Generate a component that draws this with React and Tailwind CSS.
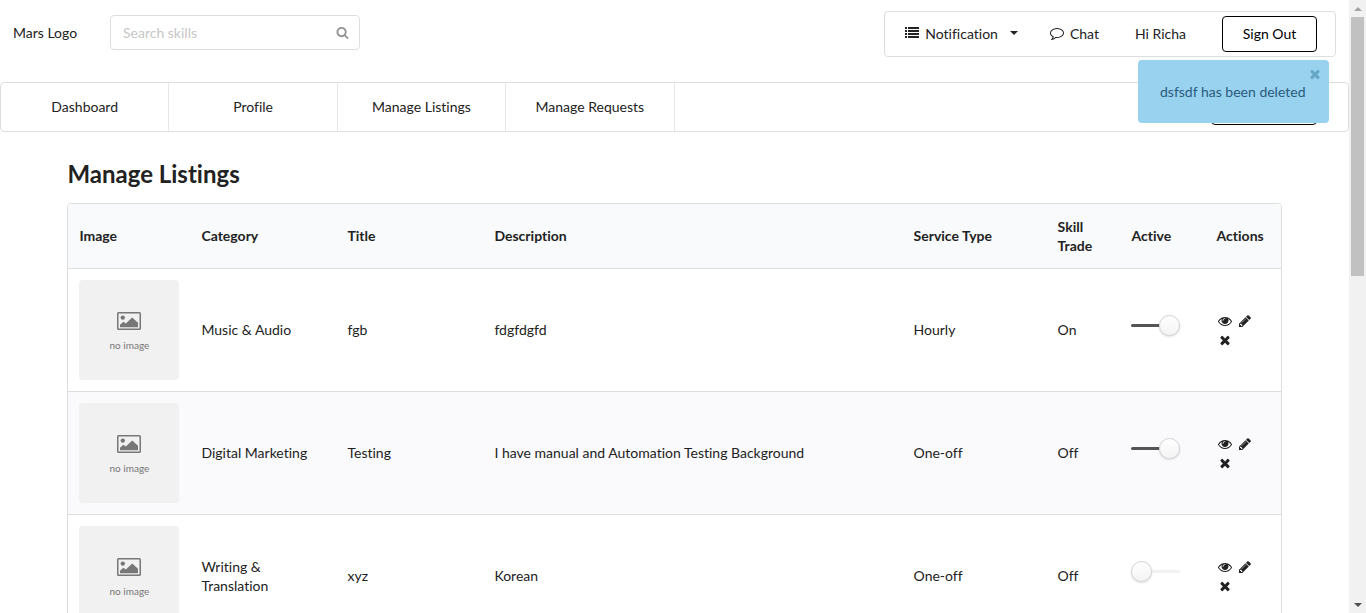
import React from "react";

const PATHS = {
  search:
    "M1216 832q0-185-131.5-316.5t-316.5-131.5-316.5 131.5-131.5 316.5 131.5 316.5 316.5 131.5 316.5-131.5 131.5-316.5zm512 832q0 52-38 90t-90 38q-54 0-90-38l-343-342q-179 124-399 124-143 0-273.5-55.5t-225-150-150-225-55.5-273.5 55.5-273.5 150-225 225-150 273.5-55.5 273.5 55.5 225 150 150 225 55.5 273.5q0 220-124 399l343 343q37 37 37 90z",
  times:
    "M1490 1322q0 40-28 68l-136 136q-28 28-68 28t-68-28l-294-294-294 294q-28 28-68 28t-68-28l-136-136q-28-28-28-68t28-68l294-294-294-294q-28-28-28-68t28-68l136-136q28-28 68-28t68 28l294 294 294-294q28-28 68-28t68 28l136 136q28 28 28 68t-28 68l-294 294 294 294q28 28 28 68z",
  pencil:
    "M491 1536l91-91-235-235-91 91v107h128v128h107zm523-928q0-22-22-22-10 0-17 7l-542 542q-7 7-7 17 0 22 22 22 10 0 17-7l542-542q7-7 7-17zm-54-192l416 416-832 832h-416v-416zm683 96q0 53-37 90l-166 166-416-416 166-165q36-38 90-38 53 0 91 38l235 234q37 39 37 91z",
  eye:
    "M1664 960q-152-236-381-353 61 104 61 225 0 185-131.5 316.5t-316.5 131.5-316.5-131.5-131.5-316.5q0-121 61-225-229 117-381 353 133 205 333.5 326.5t434.5 121.5 434.5-121.5 333.5-326.5zm-720-384q0-20-14-34t-34-14q-125 0-214.5 89.5t-89.5 214.5q0 20 14 34t34 14 34-14 14-34q0-86 61-147t147-61q20 0 34-14t14-34zm848 384q0 34-20 69-140 230-376.5 368.5t-499.5 138.5-499.5-139-376.5-368q-20-35-20-69t20-69q140-229 376.5-368t499.5-139 499.5 139 376.5 368q20 35 20 69z",
  comment:
    "M896 384q-204 0-381.5 69.5t-282 187.5-104.5 255q0 112 71.5 213.5t201.5 175.5l87 50-27 96q-24 91-70 172 152-63 275-171l43-38 57 6q69 8 130 8 204 0 381.5-69.5t282-187.5 104.5-255-104.5-255-282-187.5-381.5-69.5zm896 512q0 174-120 321.5t-326 233-450 85.5q-70 0-145-8-198 175-460 242-49 14-114 22h-5q-15 0-27-10.5t-16-27.5v-1q-3-4-.5-12t2-10 4.5-9.5l6-9 7-8.5 8-9q7-8 31-34.5t34.5-38 31-39.5 32.5-51 27-59 26-76q-157-89-247.5-220t-90.5-281q0-174 120-321.5t326-233 450-85.5 450 85.5 326 233 120 321.5z",
};

function Icon({ name, className }) {
  return (
    <svg viewBox="0 0 1792 1792" fill="currentColor" aria-hidden="true" className={className}>
      <path d={PATHS[name]} />
    </svg>
  );
}

function ListIcon() {
  return (
    <svg viewBox="0 0 14 12" fill="currentColor" aria-hidden="true" className="h-3 w-3.5">
      {[0, 3, 6, 9].map((y) => (
        <g key={y}>
          <rect x="0" y={y} width="2" height="2" />
          <rect x="3" y={y} width="11" height="2" />
        </g>
      ))}
    </svg>
  );
}

function Placeholder() {
  return (
    <div className="flex size-[100px] flex-col items-center rounded-[4px] bg-[#f1f1f1] pt-8 text-[#777777]">
      <svg viewBox="0 0 24 18" aria-hidden="true" className="h-[18px] w-6" fill="currentColor">
        <rect x="0.75" y="0.75" width="22.5" height="16.5" rx="0.8" fill="none" stroke="currentColor" strokeWidth="1.5" />
        <circle cx="5.8" cy="5.6" r="2.2" />
        <path d="M3 15.2v-2.4l3.4-3 2.4 1.6 6.4-6 5.8 5.4v4.4z" />
      </svg>
      <span className="mt-2 text-[10px] leading-[14px]">no image</span>
    </div>
  );
}

function Toggle({ label, defaultChecked }) {
  return (
    <label className="relative mb-2 flex h-[21px] w-[49px] items-center">
      <input type="checkbox" aria-label={label} defaultChecked={defaultChecked} className="peer sr-only" />
      <span className="h-[3px] w-full rounded-full bg-[#f2f2f2] peer-checked:bg-[#545454]" />
      <span className="absolute left-0 top-0 size-[21px] rounded-full border border-[#d4d4d5] bg-white bg-linear-to-b from-white to-[#f4f4f4] shadow-[0_1px_2px_rgba(34,36,38,0.15)] peer-checked:left-7" />
    </label>
  );
}

const LISTINGS = [
  { category: "Music & Audio", title: "fgb", description: "fdgfdgfd", service: "Hourly", trade: "On", active: true },
  { category: "Digital Marketing", title: "Testing", description: "I have manual and Automation Testing Background", service: "One-off", trade: "Off", active: true },
  { category: "Writing & Translation", title: "xyz", description: "Korean", service: "One-off", trade: "Off", active: false },
];

const COLUMNS = [
  ["Image", "w-[122px]"],
  ["Category", "w-[146px]"],
  ["Title", "w-[147px]"],
  ["Description", ""],
  ["Service Type", "w-[144px]"],
  ["Skill Trade", "w-[74px]"],
  ["Active", "w-[85px]"],
  ["Actions", "w-[75px]"],
];

function Header() {
  return (
    <header className="flex items-start justify-between pb-[25px] pl-[13px] pr-[13px] pt-[11px]">
      <div className="flex items-center pt-1">
        <a href="#home" className="w-[97px]">Mars Logo</a>
        <div className="flex h-[35px] w-[250px] items-center rounded-[4px] border border-[#dededf] pl-3 pr-2.5">
          <input
            type="text"
            aria-label="Search skills"
            placeholder="Search skills"
            className="min-w-0 flex-1 outline-none placeholder:text-[#c7c7c7]"
          />
          <button type="button" aria-label="Search" className="text-[#959595]">
            <Icon name="search" className="size-[13px]" />
          </button>
        </div>
      </div>
      <div className="flex h-[46px] items-center rounded-[4px] border border-[#dededf] pl-5 pr-[18px]">
        <button type="button" className="flex items-center pb-0.5">
          <ListIcon />
          <span className="ml-1.5">Notification</span>
          <span className="ml-3 border-x-4 border-t-4 border-x-transparent border-t-[#222222]" />
        </button>
        <a href="#chat" className="ml-8 flex items-center pb-0.5">
          <Icon name="comment" className="size-3.5" />
          <span className="ml-1.5">Chat</span>
        </a>
        <span className="ml-9 pb-0.5">Hi Richa</span>
        <button type="button" className="ml-9 h-9 w-[95px] rounded-[4px] border border-black pb-0.5 text-black">Sign Out</button>
      </div>
    </header>
  );
}

function Toast() {
  return (
    <div role="status" className="absolute right-5 top-[60px] h-[63px] min-w-[191px] rounded-[4px] bg-[#98d2ef] px-[22px] pt-[22px] text-[#2b5a7c]">
      dsfsdf has been deleted
      <button type="button" aria-label="Close" className="absolute right-[7px] top-[7px] text-[#65a5c5]">
        <Icon name="times" className="size-3.5" />
      </button>
    </div>
  );
}

function ScrollBar() {
  return (
    <div aria-hidden="true" className="flex w-[17px] shrink-0 flex-col items-center bg-[#f1f1f1]">
      <span className="mb-[6px] mt-[7px] border-x-4 border-b-4 border-x-transparent border-b-[#a3a3a3]" />
      <span className="h-[259px] w-[13px] bg-[#c1c1c1]" />
      <span className="mb-[6px] mt-auto border-x-4 border-t-4 border-x-transparent border-t-[#505050]" />
    </div>
  );
}

export default function App() {
  return (
    <div className="flex h-screen bg-white font-['Lato',sans-serif] text-[14px] leading-[19px] text-[#222222] [font-variant-ligatures:none]">
      <div className="relative min-w-0 flex-1 overflow-y-auto [scrollbar-width:none]">
        <Header />
        <nav className="flex h-[50px] rounded-[4px] border border-[#dededf]">
          {["Dashboard", "Profile", "Manage Listings", "Manage Requests"].map((item) => (
            <a key={item} href="#nav" className="flex w-1/8 items-center justify-center border-r border-[#e6e6e6] pb-0.5">
              {item}
            </a>
          ))}
          <button type="button" className="ml-auto mr-[31px] mt-1.5 h-9 w-[106px] rounded-[4px] border border-black text-black">
            Share Skill
          </button>
        </nav>
        <Toast />
        <main className="mx-[5%] pt-7">
          <h1 className="text-2xl leading-7 font-bold">Manage Listings</h1>
          <div className="mt-[15px] overflow-hidden rounded-[4px] border border-[#dededf]">
            <table className="w-full table-fixed text-left">
              <thead>
                <tr className="h-16 bg-[#f9fafb]">
                  {COLUMNS.map(([name, width]) => (
                    <th key={name} scope="col" className={"px-[11px] font-bold last:pr-0 " + width}>{name}</th>
                  ))}
                </tr>
              </thead>
              <tbody>
                {LISTINGS.map((row) => (
                  <tr key={row.title} className="h-[123px] border-t border-[#dededf] even:bg-[#fafafc]">
                    <td className="px-[11px]"><Placeholder /></td>
                    <td className="px-[11px]">{row.category}</td>
                    <td className="px-[11px]">{row.title}</td>
                    <td className="px-[11px]">{row.description}</td>
                    <td className="px-[11px]">{row.service}</td>
                    <td className="px-[11px]">{row.trade}</td>
                    <td className="px-2.5"><Toggle label={"Active: " + row.title} defaultChecked={row.active} /></td>
                    <td className="pl-3">
                      <div className="grid w-10 grid-cols-2 pt-0.5">
                        <button type="button" aria-label="View" className="h-[19px]"><Icon name="eye" className="size-3.5" /></button>
                        <button type="button" aria-label="Edit" className="h-[19px]"><Icon name="pencil" className="size-3.5" /></button>
                        <button type="button" aria-label="Delete" className="h-[19px]"><Icon name="times" className="size-3.5" /></button>
                      </div>
                    </td>
                  </tr>
                ))}
              </tbody>
            </table>
          </div>
        </main>
      </div>
      <ScrollBar />
    </div>
  );
}
